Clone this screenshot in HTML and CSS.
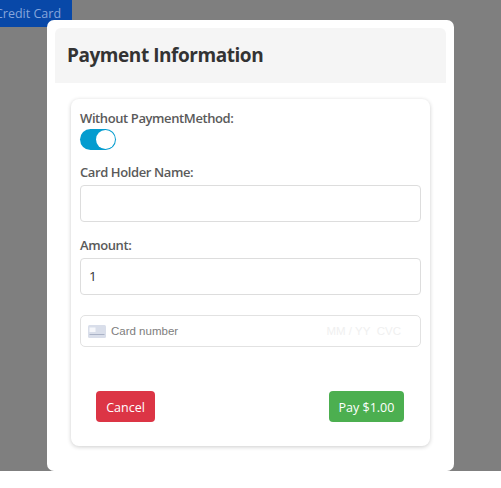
FILE: index.html
```html
<!DOCTYPE html>
<html lang="en">
<head>
<meta charset="utf-8">
<title>Payment Information</title>
<link rel="stylesheet" href="styles.css">
</head>
<body>
<button class="open-btn" type="button">Credit Card</button>
<div class="backdrop">
  <div class="modal">
    <header class="modal-header"><h2>Payment Information</h2></header>
    <form class="card">
      <label class="label">Without PaymentMethod:</label>
      <span class="toggle"><span class="knob"></span></span>
      <label class="label name-label">Card Holder Name:</label>
      <div class="input"></div>
      <label class="label amount-label">Amount:</label>
      <div class="input">1</div>
      <div class="stripe">
        <svg class="card-icon" width="18" height="13" viewBox="0 0 18 13" aria-hidden="true">
          <rect width="18" height="13" rx="1.5" fill="#d9deea"/>
          <rect x="1.5" y="2.5" width="6" height="4.5" fill="#f6f7fb"/>
          <rect x="1.5" y="9" width="15" height="1" fill="#aab2c6"/>
        </svg>
        <span class="card-number">Card number</span>
        <span class="expiry">MM / YY&nbsp; CVC</span>
      </div>
      <div class="actions">
        <button class="btn cancel" type="button">Cancel</button>
        <button class="btn pay" type="button">Pay $1.00</button>
      </div>
    </form>
  </div>
</div>
</body>
</html>
```
FILE: styles.css
```css
* { box-sizing: border-box; }
html, body { margin: 0; height: 488px; overflow: hidden; background: #fff; }
body { font-family: "Open Sans", "Noto Sans", sans-serif; position: relative; }
.open-btn {
  position: absolute; left: -16px; top: -6px; width: 88px; height: 33px; z-index: 1;
  background: #0848a8; color: #86a6dc; border: 0; padding: 6px 0 0; margin: 0;
  font: 12.5px "Open Sans", sans-serif; text-align: center;
}
.backdrop {
  position: absolute; left: 0; top: 0; width: 501px; height: 471px;
  background: #7f7f7f; padding: 20px 47px 0;
}
.modal {
  position: relative; z-index: 2;
  width: 407px; height: 451px; background: #fff; border-radius: 7px;
  padding: 8px 8px 0;
}
.modal-header {
  height: 55px; background: #f5f5f5; border-radius: 6px 6px 0 0;
  padding: 0 12px; display: flex; align-items: center;
}
.modal-header h2 { margin: 0; font-size: 19px; font-weight: 700; color: #333; line-height: 1; letter-spacing: -.45px; }
.card {
  margin: 16px 16px 0; width: 359px; height: 347px; background: #fff;
  border-radius: 8px; box-shadow: 0 1px 4px rgba(0,0,0,.2);
  padding: 10px 9px 0; display: flex; flex-direction: column;
}
.label { font-size: 13px; font-weight: 600; color: #5a5a5a; line-height: 18px; display: block; letter-spacing: -.4px; }
.toggle {
  display: block; width: 36px; height: 21px; border-radius: 11px; background: #049ccf;
  margin-top: 2px; position: relative;
}
.knob {
  position: absolute; right: 1px; top: 1px; width: 19px; height: 19px;
  border-radius: 50%; background: #fff;
}
.name-label { margin-top: 13px; }
.amount-label { margin-top: 14px; }
.input {
  height: 37px; border: 1px solid #ddd; border-radius: 4px; margin-top: 4px;
  padding: 0 8px; font-size: 13.5px; line-height: 35px; color: #333;
}
.stripe {
  height: 32px; margin-top: 20px; border: 1px solid #e2e2e2; border-radius: 5px;
  display: flex; align-items: center; padding: 0 7px;
  font-family: "Liberation Sans", Arial, sans-serif; font-size: 11.5px;
}
.card-icon { flex: none; }
.card-number { margin-left: 5px; color: #7d7d7d; flex: 1; }
.expiry { color: #f0f0f0; margin-right: 12px; }
.actions { display: flex; justify-content: space-between; padding: 0 17px 0 16px; margin-top: 44px; }
.btn {
  height: 31px; border: 0; border-radius: 4px; color: #fff; padding: 1px 0 0;
  font: 12.5px "Open Sans", sans-serif;
}
.cancel { width: 59px; background: #dc3545; }
.pay { width: 75px; background: #4caf50; }
```
